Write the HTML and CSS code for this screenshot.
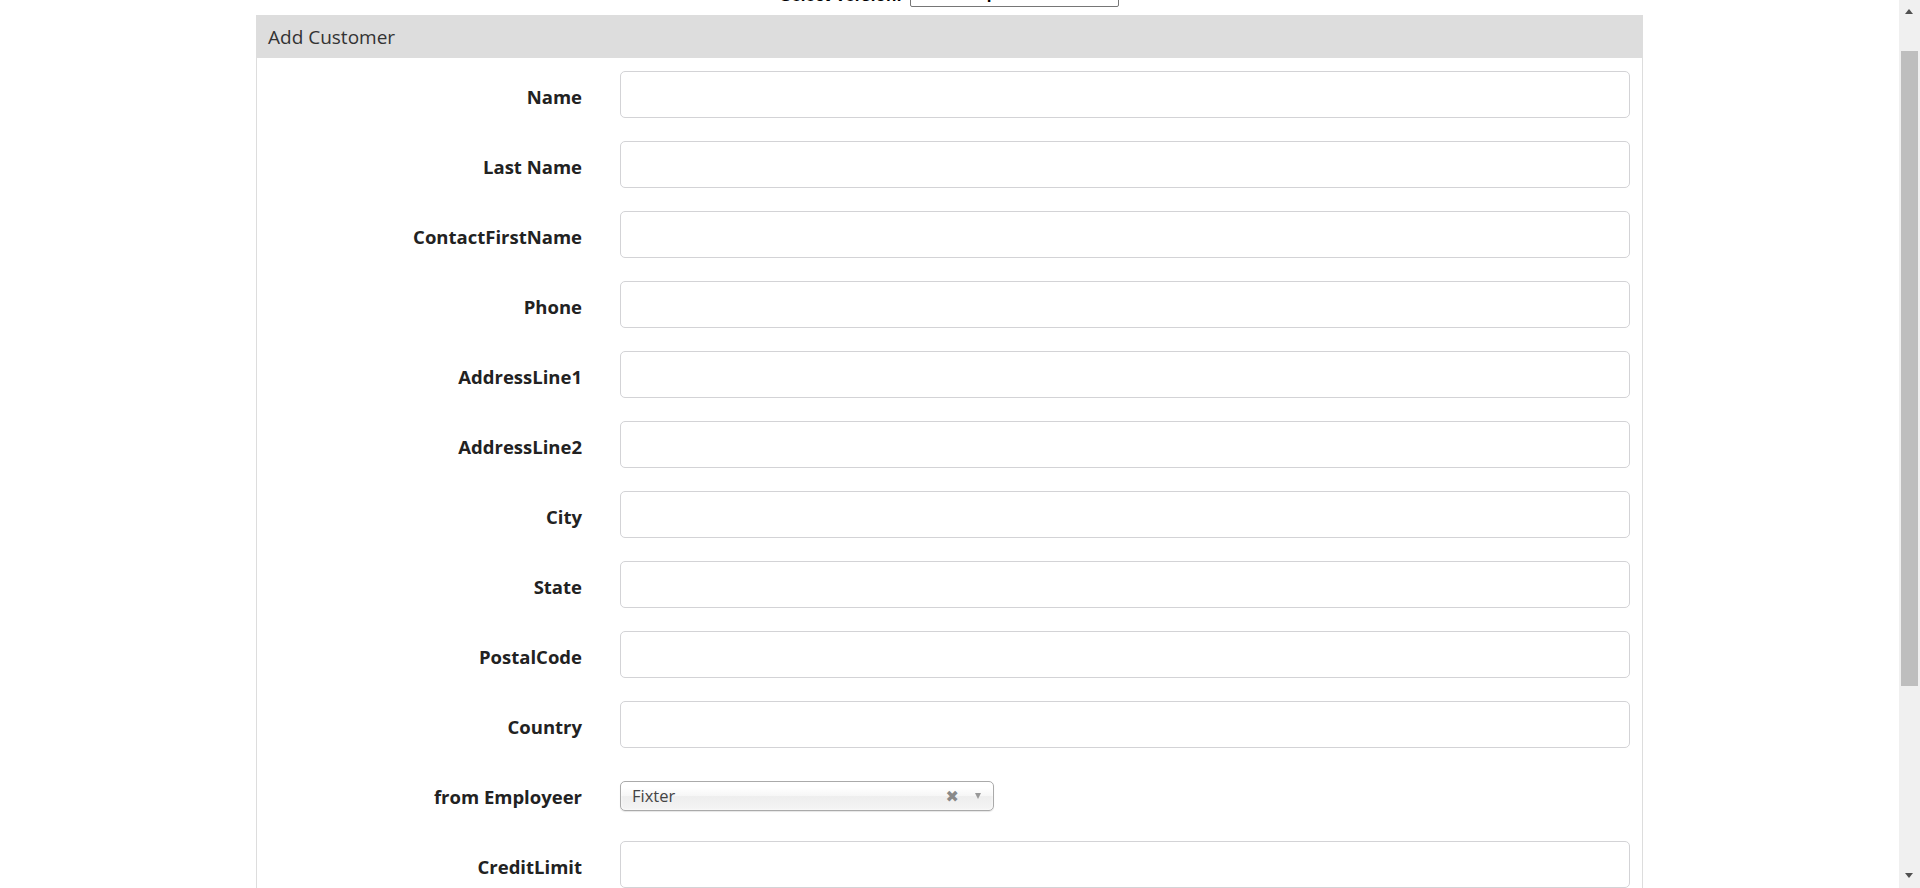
FILE: index.html
```html
<!DOCTYPE html>
<html lang="en">
<head>
<meta charset="utf-8">
<title>Add Customer</title>
<link rel="stylesheet" href="styles.css">
</head>
<body>
<div class="page">
  <div class="topbar">
    <span class="topbar-label">Select Version:</span>
    <span class="version-select">Bootstrap 4 Theme</span>
  </div>

  <div class="panel">
    <div class="panel-heading">Add Customer</div>
    <div class="panel-body">
      <div class="form-group"><label class="control-label">Name</label><div class="form-control"></div></div>
      <div class="form-group"><label class="control-label">Last Name</label><div class="form-control"></div></div>
      <div class="form-group"><label class="control-label">ContactFirstName</label><div class="form-control"></div></div>
      <div class="form-group"><label class="control-label">Phone</label><div class="form-control"></div></div>
      <div class="form-group"><label class="control-label">AddressLine1</label><div class="form-control"></div></div>
      <div class="form-group"><label class="control-label">AddressLine2</label><div class="form-control"></div></div>
      <div class="form-group"><label class="control-label">City</label><div class="form-control"></div></div>
      <div class="form-group"><label class="control-label">State</label><div class="form-control"></div></div>
      <div class="form-group"><label class="control-label">PostalCode</label><div class="form-control"></div></div>
      <div class="form-group"><label class="control-label">Country</label><div class="form-control"></div></div>
      <div class="form-group"><label class="control-label">from Employeer</label>
        <div class="chosen-wrap">
          <div class="chosen-single">
            <span class="chosen-text">Fixter</span>
            <span class="chosen-clear">&#x2716;</span>
            <span class="chosen-arrow"></span>
          </div>
        </div>
      </div>
      <div class="form-group"><label class="control-label">CreditLimit</label><div class="form-control"></div></div>
    </div>
  </div>
</div>

<div class="scrollbar">
  <span class="sb-up"></span>
  <span class="sb-thumb"></span>
  <span class="sb-down"></span>
</div>
</body>
</html>
```

FILE: styles.css
```css
html, body {
  margin: 0;
  padding: 0;
  height: 100%;
  overflow: hidden;
  background: #ffffff;
}

body {
  font-family: "Open Sans", "Noto Sans", sans-serif;
  color: #222;
}

.page {
  width: calc(100% - 21px);
}

.topbar {
  display: flex;
  justify-content: center;
  align-items: flex-end;
  gap: 8px;
  height: 26px;
  margin-top: -19px;
  font-family: "Liberation Sans", sans-serif;
  font-size: 17px;
  color: #000;
}

.topbar-label {
  line-height: 22px;
  font-weight: 700;
}

.version-select {
  box-sizing: border-box;
  width: 209px;
  height: 26px;
  border: 1px solid #767676;
  border-radius: 2px;
  padding: 1px 6px;
  font-weight: 700;
  text-align: left;
  line-height: 22px;
}

.panel {
  width: 1387px;
  box-sizing: border-box;
  margin: 8px auto 0;
  border: 1px solid #dddddd;
  border-bottom: none;
  height: 900px;
}

.panel-heading {
  background: #dddddd;
  height: 43px;
  box-sizing: border-box;
  padding: 7px 12px 0;
  margin: -1px -1px 0;
  font-size: 19px;
  line-height: 30px;
  color: #333;
}

.panel-body {
  padding: 13px 12px 0 0;
}

.form-group {
  display: grid;
  grid-template-columns: 1fr 1010px;
  column-gap: 38px;
  margin-bottom: 23px;
  min-height: 47px;
}

.control-label {
  text-align: right;
  font-weight: 700;
  font-size: 18.5px;
  line-height: 26px;
  padding-top: 13px;
  color: #222;
  white-space: nowrap;
}

.form-control {
  box-sizing: border-box;
  height: 47px;
  border: 1px solid #d3d3d6;
  border-radius: 5px;
  background: #fff;
}

.chosen-wrap {
  padding-top: 10px;
}

.chosen-single {
  box-sizing: border-box;
  width: 374px;
  height: 30px;
  border: 1px solid #aaaaaa;
  border-radius: 5px;
  background: linear-gradient(to bottom, #ffffff 20%, #f6f6f6 50%, #eeeeee 52%, #f4f4f4 100%);
  box-shadow: inset 0 0 3px #fff, 0 1px 1px rgba(0,0,0,0.1);
  display: flex;
  align-items: center;
  padding: 0 12px 0 11px;
  color: #444;
  font-size: 16.5px;
}

.chosen-text {
  flex: 1;
  line-height: 28px;
}

.chosen-clear {
  color: #8a8a8a;
  font-size: 16px;
  font-weight: 700;
  margin-right: 16px;
  font-family: "DejaVu Sans", sans-serif;
}

.chosen-arrow {
  width: 0;
  height: 0;
  border-left: 3.5px solid transparent;
  border-right: 3.5px solid transparent;
  border-top: 6px solid #999;
}

.scrollbar {
  position: fixed;
  top: 0;
  right: 0;
  width: 21px;
  height: 100%;
  background: #f0f0f0;
}

.sb-up, .sb-down {
  position: absolute;
  left: 6px;
  width: 0;
  height: 0;
  border-left: 4.5px solid transparent;
  border-right: 4.5px solid transparent;
}

.sb-up {
  top: 9px;
  border-bottom: 5px solid #505050;
}

.sb-down {
  bottom: 10px;
  border-top: 5px solid #505050;
}

.sb-thumb {
  position: absolute;
  left: 2px;
  top: 51px;
  width: 17px;
  height: 635px;
  background: #bebebe;
}
```
